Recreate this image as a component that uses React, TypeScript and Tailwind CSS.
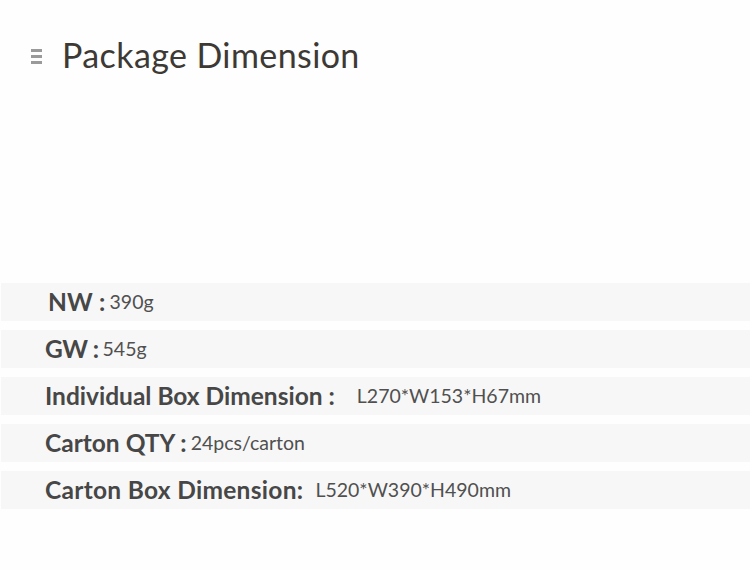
import React from "react";

const rows: { label: string; value: string; labelClass: string; gap: string }[] = [
  { label: "NW :", value: "390g", labelClass: "pl-[47px] tracking-[0.2px]", gap: "ml-[4px]" },
  { label: "GW :", value: "545g", labelClass: "pl-[44px] tracking-[-0.5px]", gap: "ml-[4px]" },
  { label: "Individual Box Dimension :", value: "L270*W153*H67mm", labelClass: "pl-[44px]", gap: "ml-[22px]" },
  { label: "Carton QTY :", value: "24pcs/carton", labelClass: "pl-[44px]", gap: "ml-[4px]" },
  { label: "Carton Box Dimension:", value: "L520*W390*H490mm", labelClass: "pl-[44px] tracking-[0.3px]", gap: "ml-[12px]" },
];

export default function App() {
  return (
    <div className="w-[750px] h-[570px] bg-[#fefefe] overflow-hidden" style={{ fontFamily: "Lato, 'Noto Sans', sans-serif" }}>
      <div className="flex items-center pt-[35px] pl-[31px] h-[75px]">
        <svg width="12" height="16" viewBox="0 0 12 16" className="mt-[2px]">
          <rect x="0" y="1" width="11" height="3" fill="#9a9a9a" />
          <rect x="0" y="7" width="11" height="3" fill="#9a9a9a" />
          <rect x="0" y="13" width="11" height="3" fill="#9a9a9a" />
        </svg>
        <h1 className="ml-[19px] text-[34px] tracking-[0.4px] leading-none text-[#3d3935]">Package Dimension</h1>
      </div>
      <div className="mt-[208px] flex flex-col gap-[9px] pl-[1px]">
        {rows.map((r) => (
          <div key={r.label} className="h-[38px] bg-[#f7f7f7] flex items-center">
            <span className={`text-[24.5px] font-bold text-[#474747] ${r.labelClass}`}>{r.label}</span>
            <span className={`text-[19.5px] text-[#505050] ${r.gap}`}>{r.value}</span>
          </div>
        ))}
      </div>
    </div>
  );
}
